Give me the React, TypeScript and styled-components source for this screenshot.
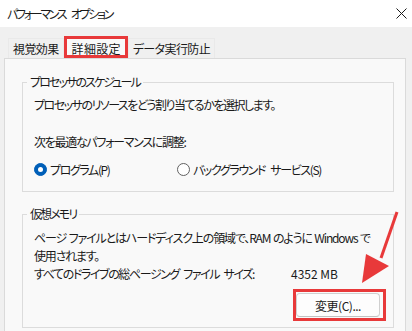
import React from "react";
import styled, {createGlobalStyle} from "styled-components";

const GlobalStyle = createGlobalStyle`
    html, body {
        margin: 0;
        padding: 0;
        background: #ffffff;
    }
    body {
        font-family: "Noto Sans CJK JP", "Noto Sans", sans-serif;
        font-feature-settings: "palt";
        letter-spacing: -1px;
        word-spacing: 2px;
        color: #1a1a1a;
        font-size: 12px;
    }
`;

const Window = styled.div`
    position: relative;
    width: 412px;
    height: 331px;
    overflow: hidden;
    background: #f0f0f0;
`;

const TitleBar = styled.div`
    height: 27px;
    background: #ffffff;
    display: flex;
    align-items: center;
    justify-content: space-between;
    padding: 0 5px 0 7px;
    box-sizing: border-box;
    font-size: 12px;
    letter-spacing: -2.3px;
    word-spacing: 5px;
`;

const Body = styled.div`
    padding: 9px 6px 0 4px;
`;

const TabRow = styled.div`
    display: flex;
    align-items: flex-end;
    height: 22px;
    padding-left: 4px;
`;

const Tab = styled.div<{ $active?: boolean }>`
    box-sizing: border-box;
    height: ${p => p.$active ? "22px" : "20px"};
    line-height: ${p => p.$active ? "20px" : "19px"};
    padding: ${p => p.$active ? "0 4px 0 5px" : "0 4px"};
    background: ${p => p.$active ? "#f9f9f9" : "#f0f0f0"};
    border: ${p => p.$active ? "3px solid #e8393a" : "1px solid #e9e9e9"};
    border-bottom: ${p => p.$active ? "3px solid #e8393a" : "none"};
    white-space: nowrap;
    letter-spacing: ${p => p.$active ? "0.3px" : "-0.6px"};
`;

const Panel = styled.div`
    background: #f9f9f9;
    border: 1px solid #dadada;
    height: 300px;
    padding: 15px 11px 0 17px;
`;

const Group = styled.fieldset<{ $gap?: number }>`
    margin: ${p => p.$gap ?? 0}px 0 0 0;
    padding: 0 13px ${p => p.$gap ? 6 : 13}px 11px;
    border: 1px solid #dcdcdc;
    min-width: 0;
`;

const Legend = styled.legend`
    font-size: 12px;
    line-height: 16px;
    padding: 0 3px;
    margin-left: -7px;
    letter-spacing: -1.9px;
`;

const Line = styled.div<{ $top?: number; $spacing?: number; $words?: number }>`
    line-height: 18px;
    margin-top: ${p => p.$top ?? 0}px;
    white-space: nowrap;
    letter-spacing: ${p => p.$spacing ?? -1}px;
    word-spacing: ${p => p.$words ?? 2}px;
`;

const RadioRow = styled.div`
    display: flex;
    align-items: center;
    height: 18px;
    margin-top: 9px;
`;

const RadioOption = styled.label<{ $width?: number }>`
    display: flex;
    align-items: center;
    gap: 3px;
    width: ${p => p.$width ? `${p.$width}px` : "auto"};
    white-space: nowrap;
    letter-spacing: -1.4px;
    word-spacing: 4px;
`;

const RadioDot = styled.span<{ $checked?: boolean }>`
    box-sizing: border-box;
    width: 13px;
    height: 13px;
    border-radius: 50%;
    background: ${p => p.$checked ? "#005fb8" : "#ffffff"};
    border: 1px solid ${p => p.$checked ? "#005fb8" : "#616161"};
    display: flex;
    align-items: center;
    justify-content: center;

    &::after {
        content: "";
        display: ${p => p.$checked ? "block" : "none"};
        width: 5px;
        height: 5px;
        border-radius: 50%;
        background: #ffffff;
    }
`;

const SizeRow = styled.div`
    display: flex;
    line-height: 18px;
`;

const SizeLabel = styled.span`
    width: 257px;
    white-space: nowrap;
    letter-spacing: -1.4px;
    word-spacing: 3px;
`;

const SizeValue = styled.span`
    letter-spacing: 0;
    word-spacing: 0;
`;

const ButtonRow = styled.div`
    display: flex;
    justify-content: flex-end;
    margin-top: 6px;
`;

const Highlight = styled.div`
    border: 3px solid #e8393a;
    padding: 1px 3px 1px 0;
    margin-right: -6px;
`;

const Button = styled.div`
    box-sizing: border-box;
    width: 84px;
    height: 24px;
    border: 1px solid #d0d0d0;
    border-bottom-color: #c2c2c2;
    border-radius: 4px;
    background: #fdfdfd;
    display: flex;
    align-items: center;
    justify-content: center;
    font-size: 12px;
    letter-spacing: -0.5px;
`;

const Arrow = styled.svg`
    position: absolute;
    left: 0;
    top: 0;
    pointer-events: none;
`;

const CloseIcon = () => (
    <svg width="11" height="11" viewBox="0 0 11 11">
        <path d="M0.5 0.5 L10.5 10.5 M10.5 0.5 L0.5 10.5" stroke="#1a1a1a" strokeWidth="1" fill="none"/>
    </svg>
);

const App = () => {
    return (
        <>
            <GlobalStyle/>
            <Window>
                <TitleBar>
                    <span>パフォーマンス オプション</span>
                    <CloseIcon/>
                </TitleBar>
                <Body>
                    <TabRow>
                        <Tab>視覚効果</Tab>
                        <Tab $active>詳細設定</Tab>
                        <Tab>データ実行防止</Tab>
                    </TabRow>
                    <Panel>
                        <Group>
                            <Legend>プロセッサのスケジュール</Legend>
                            <Line $top={6} $spacing={-1.5}>プロセッサのリソースをどう割り当てるかを選択します。</Line>
                            <Line $top={19} $spacing={-1.3}>次を最適なパフォーマンスに調整:</Line>
                            <RadioRow>
                                <RadioOption $width={143}>
                                    <RadioDot $checked/>
                                    プログラム(P)
                                </RadioOption>
                                <RadioOption>
                                    <RadioDot/>
                                    バックグラウンド サービス(S)
                                </RadioOption>
                            </RadioRow>
                        </Group>
                        <Group $gap={14}>
                            <Legend>仮想メモリ</Legend>
                            <Line $top={7} $spacing={-1.15} $words={1}>ページ ファイルとはハードディスク上の領域で、RAM のように Windows で</Line>
                            <Line $spacing={-1.2}>使用されます。</Line>
                            <SizeRow>
                                <SizeLabel>すべてのドライブの総ページング ファイル サイズ:</SizeLabel>
                                <SizeValue>4352 MB</SizeValue>
                            </SizeRow>
                            <ButtonRow>
                                <Highlight>
                                    <Button>変更(C)...</Button>
                                </Highlight>
                            </ButtonRow>
                        </Group>
                    </Panel>
                </Body>
                <Arrow width="412" height="331" viewBox="0 0 412 331">
                    <path d="M397 212 L381 258" stroke="#e8393a" strokeWidth="3" fill="none"/>
                    <path d="M362 283 L366 254 L389 266 Z" fill="#e8393a"/>
                </Arrow>
            </Window>
        </>
    );
};

export default App;
